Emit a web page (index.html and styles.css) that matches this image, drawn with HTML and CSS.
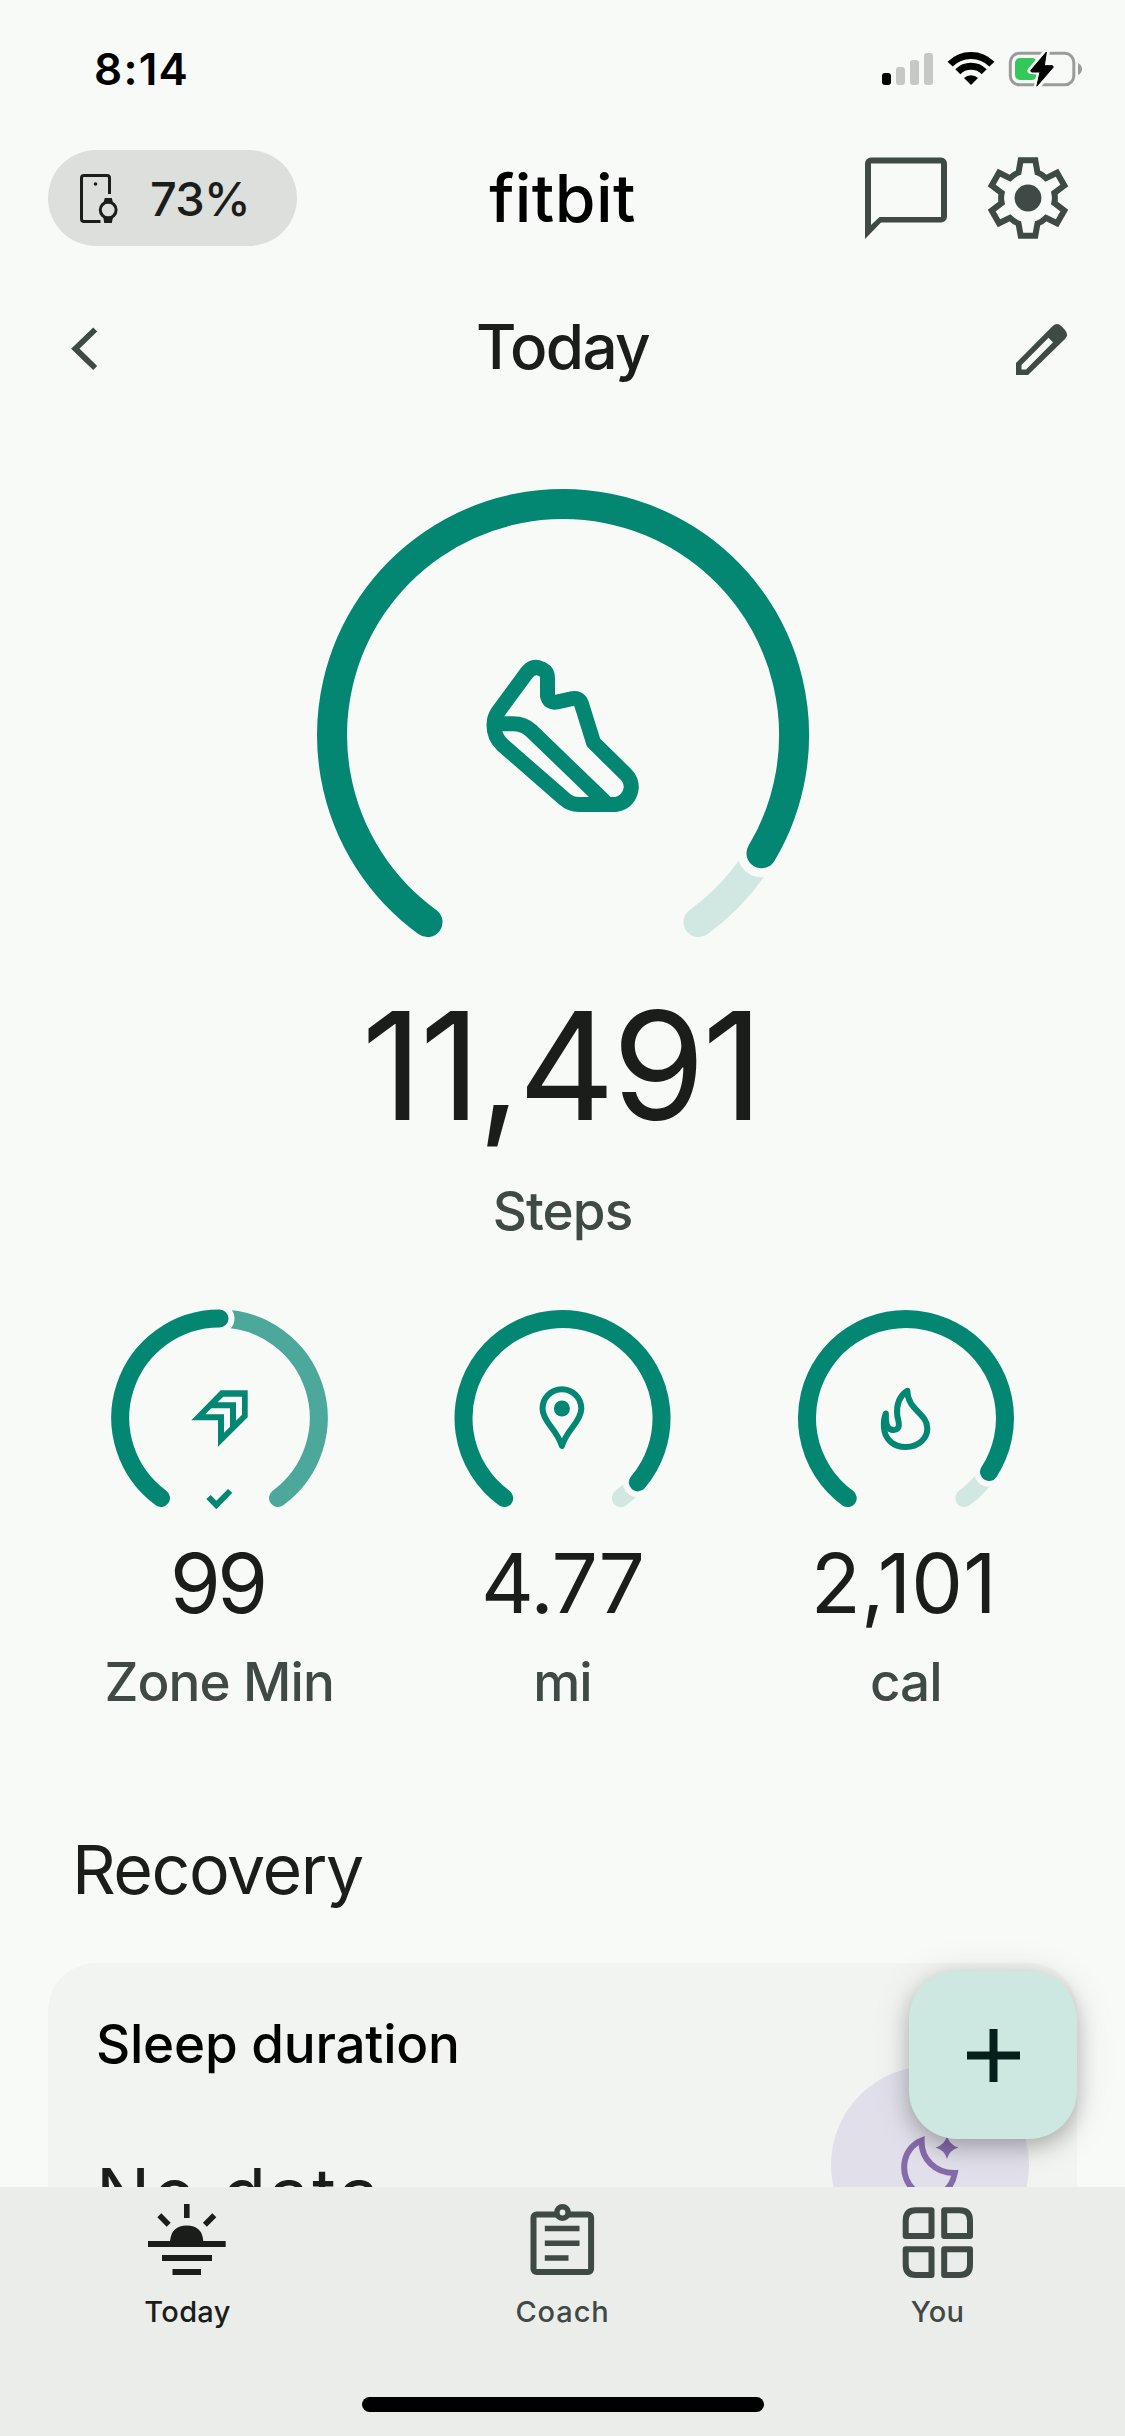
FILE: index.html
```html
<!DOCTYPE html>
<html lang="en">
<head>
<meta charset="utf-8">
<title>Fitbit</title>
<link rel="stylesheet" href="styles.css">
</head>
<body>
<div class="screen">
  <main class="content">
    <div class="status">
      <span class="status-time">8:14</span>
      <svg class="status-icons" viewBox="880 48 204 42" width="204" height="42">
        <rect x="882" y="73" width="9" height="12" rx="3"/>
        <g fill="#c6c8c5">
          <rect x="896" y="67" width="9" height="18" rx="3"/>
          <rect x="910" y="60" width="9" height="25" rx="3"/>
          <rect x="924" y="53" width="9" height="32" rx="3"/>
        </g>
        <g fill="none" stroke="#000" stroke-width="7">
          <path d="M950.1 64.1A29.5 29.5 0 0 1 991.9 64.1"/>
          <path d="M957.8 71.8A18.7 18.7 0 0 1 984.2 71.8"/>
        </g>
        <path d="M971 85L964 78A10 10 0 0 1 978 78Z"/>
        <rect x="1010.3" y="53.3" width="63.5" height="31.5" rx="9" fill="none" stroke="#9a9c99" stroke-width="3"/>
        <path d="M1078 63Q1082 65 1082 69T1078 75Z" fill="#9a9c99"/>
        <rect x="1015" y="58" width="22" height="22" rx="5" fill="#34c759"/>
        <path d="M1047 51L1030.4 70.7 1040 72 1036.8 87 1053.6 67 1044.3 65.5Z" fill="none" stroke="#f8faf7" stroke-width="6" stroke-linejoin="round"/>
        <path d="M1046.4 52L1031 70.2Q1030.4 71.7 1032 72H1040L1036.8 86.2 1053 67.5Q1053.8 66 1052 65.7H1044.3Z" stroke="#000" stroke-linejoin="round"/>
      </svg>
    </div>

    <header class="header">
      <div class="battery-pill">
        <svg viewBox="80 174 38 49" width="38" height="49">
          <path d="M109.5 194V178Q109.5 175.5 107 175.5H84Q81.500 175.500 81.500 178V219Q81.500 221.500 84 221.500H100.500" fill="none" stroke="#1b1d1b" stroke-width="3"/>
          <circle cx="95.500" cy="184" r="1.800" fill="#1b1d1b"/>
          <circle cx="108.200" cy="210" r="7.900" fill="none" stroke="#1b1d1b" stroke-width="3"/>
          <path d="M104.800 198H111.800L113.200 203.500H103.200ZM103.200 216.500H113.200L111.800 223H104.200Z" fill="#1b1d1b"/>
        </svg>
        <span class="battery-level">73%</span>
      </div>
      <div class="brand">fitbit</div>
      <div class="header-actions">
        <svg viewBox="865 157 82 82" width="82" height="82" fill="#3f4945">
          <path fill-rule="evenodd" d="M865 239V163.500A6 6 0 0 1 871 157.500H941A6 6 0 0 1 947 163.500V216.500A6 6 0 0 1 941 222.500H881ZM871 225L879.500 217H941V163.500H871Z"/>
        </svg>
        <svg viewBox="-41 -41 82 82" width="82" height="82">
          <path d="M-9.500-25.500L-7.300-37.700H7.300L9.500-25.500Q13.500-24.200 18-19.800L29-25.200 36.300-12.500 26.300-5Q27.500 0 26.300 5L36.300 12.500 29 25.200 18 19.800Q13.500 24.200 9.500 25.500L7.300 37.700H-7.300L-9.500 25.500Q-13.500 24.200-18 19.800L-29 25.200-36.300 12.500-26.300 5Q-27.500 0-26.300-5L-36.300-12.500-29-25.200-18-19.800Q-13.500-24.200-9.500-25.500Z" fill="none" stroke="#3f4945" stroke-width="6"/>
          <circle r="13.400" fill="#3f4945"/>
        </svg>
      </div>
    </header>

    <div class="datebar">
      <svg viewBox="70 326 29 45" width="29" height="45">
        <path d="M95.200 329.500L75.300 348.700 95.200 368" fill="none" stroke="#3f4945" stroke-width="5.800"/>
      </svg>
      <h1 class="date-title">Today</h1>
      <svg viewBox="1015 321 54 54" width="54" height="54" fill="#3f4945">
        <path fill-rule="evenodd" d="M1016 374V362L1052.500 325.200Q1057 321 1061.500 325.200L1065 329Q1069 333.500 1065 338L1028 374ZM1021.500 368.500H1026L1053 341.200 1048.500 336.800 1021.500 364Z"/>
      </svg>
    </div>

    <section class="steps">
      <svg viewBox="312 485 501 455" width="501" height="455" fill="none" stroke-linecap="round">
        <path d="M761.500 853.300A231 231 0 0 1 698.500 922.100" stroke="#d0e8e1" stroke-width="30"/>
        <circle cx="761.500" cy="853.300" r="24" fill="#f8faf7"/>
        <path d="M427.500 922.100A231 231 0 1 1 761.500 853.300" stroke="#038672" stroke-width="30"/>
        <g stroke="#038672" stroke-width="15" stroke-linejoin="round">
          <path d="M498 712L527 672.500Q533 665 541 668.700L543 669.700Q547.500 672 547.500 678V695.500Q549 703.500 557 702L570.500 699Q579 696.800 581.500 704L593.500 742.500 626 774.500Q631.300 779.500 631.300 788 629 802 616 804.500H579Q570.500 804.500 564.500 799L502 744.500Q494 736.500 494 725.500 494 717.500 498 712Z"/>
          <path d="M500 723.700H513Q524 723.700 531 730.500L604 801"/>
        </g>
      </svg>
      <div class="steps-value">11,491</div>
      <div class="label">Steps</div>
    </section>

    <section class="metrics">
      <div class="metric">
        <svg viewBox="109 1307 220 204" width="220" height="204" fill="none" stroke-linecap="round">
          <path d="M219.500 1318.500A99.300 99.300 0 0 1 278 1498" stroke="#4ba89a" stroke-width="18"/>
          <circle cx="219.500" cy="1318.500" r="15" fill="#f8faf7"/>
          <path d="M161 1498A99.300 99.300 0 0 1 219.500 1318.500" stroke="#038672" stroke-width="18"/>
          <path fill="#038672" fill-rule="evenodd" d="M220.700 1390.300H247.700V1417.300L218 1446.700V1420.300H191.300ZM223.300 1396.700L217.500 1402.300H236V1420.700L242 1414.700V1396.700ZM211.300 1408.300L205.300 1414.300H224V1432.700L230 1426.700V1408.300Z"/>
          <path fill="#038672" d="M206.300 1499L210.700 1495 216.300 1500.700 228 1489 232.300 1492.700 216.300 1509.300Z"/>
        </svg>
        <div class="metric-value tight">99</div>
        <div class="label">Zone Min</div>
      </div>
      <div class="metric">
        <svg viewBox="452.500 1307 220 204" width="220" height="204" fill="none" stroke-linecap="round">
          <path d="M638.300 1482.400A99 99 0 0 1 621.300 1498.100" stroke="#d0e8e1" stroke-width="18"/>
          <circle cx="638.300" cy="1482.400" r="15" fill="#f8faf7"/>
          <path d="M504.700 1498.100A99 99 0 1 1 638.300 1482.400" stroke="#038672" stroke-width="18"/>
          <path d="M562.400 1446Q560 1438 552 1427.500 543 1416 543 1408.500A19.400 19.400 0 0 1 581.800 1408.500Q581.800 1416 572.800 1427.500 564.800 1438 562.400 1446Z" stroke="#038672" stroke-width="6" stroke-linejoin="round"/>
          <circle cx="562.400" cy="1408.500" r="8" fill="#038672"/>
        </svg>
        <div class="metric-value">4.77</div>
        <div class="label">mi</div>
      </div>
      <div class="metric">
        <svg viewBox="796 1307 220 204" width="220" height="204" fill="none" stroke-linecap="round">
          <path d="M989 1472A99 99 0 0 1 964.300 1498.100" stroke="#d0e8e1" stroke-width="18"/>
          <circle cx="989" cy="1472" r="15" fill="#f8faf7"/>
          <path d="M847.700 1498.100A99 99 0 1 1 989 1472" stroke="#038672" stroke-width="18"/>
          <path d="M907.300 1390.800C898 1397 896.500 1407 897.200 1415 897.600 1420 900.500 1424 898 1428 895 1431.500 888 1430.500 886.500 1424 885.500 1420 886 1416 885.800 1413.500 883.800 1418 883.800 1424 883.900 1427 884.500 1439 893 1447 905.800 1447 918.500 1447 927.300 1438.500 927.300 1428.500 927.300 1413 907.500 1410 907.300 1390.800Z" stroke="#038672" stroke-width="6" stroke-linejoin="round"/>
        </svg>
        <div class="metric-value wide">2,101</div>
        <div class="label">cal</div>
      </div>
    </section>

    <h2 class="section-title">Recovery</h2>
    <article class="card">
      <div class="card-text">
        <h3 class="card-title">Sleep duration</h3>
        <p class="card-value">No data</p>
      </div>
      <div class="card-badge">
        <svg viewBox="831 2067.500 198 198" width="198" height="198">
          <path d="M921.600 2142C901 2150 898 2180 916 2193 930 2203 951 2196 954.800 2174.500 935 2175 921 2160 921.600 2142Z" fill="none" stroke="#866bab" stroke-width="6"/>
          <path d="M947 2137.500Q949.500 2146.500 958.300 2149 949.500 2151.500 947 2160.500 944.500 2151.500 935.700 2149 944.500 2146.500 947 2137.500Z" fill="#866bab"/>
        </svg>
      </div>
    </article>
  </main>

  <nav class="tabs">
    <div class="tab active">
      <svg viewBox="148 2202 80 78" width="80" height="78" fill="#1b1d1b">
        <path d="M184 2204H189.600V2218H184ZM148 2241H170Q171.500 2225.500 186.800 2225.500T203.300 2241H225.700V2247H148ZM162 2255H212V2261H162ZM172.500 2269H201V2275H172.500Z"/>
        <path d="M159.300 2215.200L168.700 2224.800M214.300 2215.200L204.900 2224.800" stroke="#1b1d1b" stroke-width="5.600"/>
      </svg>
      <span class="tab-label">Today</span>
    </div>
    <div class="tab">
      <svg viewBox="522.500 2202 80 78" width="80" height="78" fill="none" stroke="#3f4945">
        <rect x="533" y="2214.400" width="57.600" height="57.600" rx="3" stroke-width="6"/>
        <circle cx="562" cy="2212.500" r="5.700" fill="#ebedea" stroke-width="5.600"/>
        <path d="M544.300 2228.500H579M544.300 2243.300H579M544.300 2258H568" stroke-width="5.500"/>
      </svg>
      <span class="tab-label wide-label">Coach</span>
    </div>
    <div class="tab">
      <svg viewBox="897.500 2202 80 78" width="80" height="78" fill="none" stroke="#3f4945" stroke-width="6" stroke-linejoin="round">
        <path d="M915.500 2210.200H931V2236H905.200V2220.500Q905.200 2210.200 915.500 2210.200ZM943.700 2210.200H959.200Q969.500 2210.200 969.500 2220.500V2236H943.700ZM905.200 2249.200H931V2275H915.500Q905.200 2275 905.200 2264.700ZM943.700 2249.200H969.500V2264.700Q969.500 2275 959.200 2275H943.700Z"/>
      </svg>
      <span class="tab-label">You</span>
    </div>
  </nav>

  <button class="fab" aria-label="Add">
    <svg viewBox="0 0 53 53" width="53" height="53"><path d="M26.500 0V53M0 26.500H53" stroke="#05201a" stroke-width="8"/></svg>
  </button>
  <div class="home-indicator"></div>
</div>
</body>
</html>
```
FILE: styles.css
```css
* { box-sizing: border-box; margin: 0; padding: 0; }

body {
  background: #f8faf7;
  color: #1b1d1b;
  font-family: Inter, "Liberation Sans", sans-serif;
}

svg { display: block; flex: none; }

.screen {
  position: relative;
  display: flex;
  flex-direction: column;
  width: 1125px;
  height: 2436px;
  overflow: hidden;
}

.content {
  height: 2187px;
  flex: none;
  overflow: hidden;
}

.status {
  display: flex;
  justify-content: space-between;
  align-items: center;
  height: 138px;
  padding: 0 41px 0 94px;
  color: #000;
}

.status-time {
  font-size: 44px;
  font-weight: 600;
  letter-spacing: 1.27px;
}

.header {
  display: grid;
  grid-template-columns: 1fr auto 1fr;
  align-items: center;
  height: 120px;
  padding: 0 48px;
}

.battery-pill {
  display: flex;
  align-items: center;
  gap: 32px;
  width: 249px;
  height: 96px;
  padding-left: 32px;
  border-radius: 48px;
  background: #dddfdc;
}

.battery-level {
  font-size: 47px;
  font-weight: 500;
  letter-spacing: -0.8px;
}

.brand {
  color: #000;
  font-size: 66px;
  font-weight: 500;
  line-height: 80px;
  letter-spacing: 0.4px;
}

.header-actions {
  display: flex;
  justify-content: flex-end;
  gap: 40px;
  padding-right: 8px;
}

.datebar {
  display: grid;
  grid-template-columns: 1fr auto 1fr;
  align-items: center;
  height: 177px;
  padding: 4px 56px 0;
}

.datebar > :first-child { margin-left: 14px; }
.datebar > :last-child { justify-self: end; }

.date-title {
  margin-top: -3px;
  font-size: 62px;
  font-weight: 500;
  line-height: 90px;
  letter-spacing: -1.66px;
}

.steps {
  display: flex;
  flex-direction: column;
  align-items: center;
  padding-top: 50px;
}

.steps-value {
  margin-top: 50px;
  padding-right: 3px;
  font-size: 150px;
  line-height: 151px;
  letter-spacing: -2.9px;
}

.steps .label { margin-top: 40px; }

.label {
  color: #3f4945;
  font-size: 53px;
  font-weight: 500;
  line-height: 60px;
  letter-spacing: -0.9px;
}

.metrics {
  display: grid;
  grid-template-columns: repeat(3, 1fr);
  margin-top: 66px;
  padding: 0 47.5px;
}

.metric {
  display: flex;
  flex-direction: column;
  align-items: center;
}

.metric-value {
  margin-top: 28px;
  font-size: 82px;
  line-height: 90px;
  letter-spacing: -1px;
}

.metric-value.tight {
  padding-right: 4px;
  letter-spacing: -3.8px;
}

.metric-value.wide {
  padding-right: 4px;
  letter-spacing: 0.2px;
}

.metric .label { margin-top: 23px; }

.section-title {
  margin: 117px 0 0 72px;
  font-size: 68px;
  font-weight: 400;
  line-height: 80px;
  letter-spacing: -1.4px;
}

.card {
  display: flex;
  justify-content: space-between;
  height: 420px;
  margin: 54px 48px 0;
  padding: 51px 48px 0;
  border-radius: 48px;
  background: #f2f4f1;
}

.card-title {
  color: #000;
  font-size: 53px;
  font-weight: 500;
  line-height: 60px;
  letter-spacing: -0.24px;
}

.card-value {
  margin-top: 80px;
  font-size: 72px;
  line-height: 80px;
  letter-spacing: 2.8px;
}

.card-badge {
  width: 198px;
  height: 198px;
  margin-top: 52px;
  border-radius: 50%;
  background: #e1dfe9;
}

.tabs {
  display: grid;
  grid-template-columns: repeat(3, 1fr);
  height: 249px;
  padding-top: 15px;
  background: #ebedea;
}

.tab {
  display: flex;
  flex-direction: column;
  align-items: center;
  color: #3f4945;
}

.tab.active { color: #1b1d1b; }

.tab-label {
  margin-top: 14px;
  font-size: 29px;
  font-weight: 500;
  line-height: 36px;
  letter-spacing: 0.3px;
}

.wide-label { letter-spacing: 0.9px; }

.fab {
  position: absolute;
  top: 1971px;
  right: 48px;
  display: grid;
  place-items: center;
  width: 168px;
  height: 168px;
  border: 0;
  border-radius: 48px;
  background: #cde8e0;
  box-shadow: 0 8px 20px rgba(0, 0, 0, 0.22), 0 4px 40px rgba(0, 0, 0, 0.12);
}

.home-indicator {
  position: absolute;
  bottom: 24px;
  left: 362px;
  width: 402px;
  height: 15px;
  border-radius: 8px;
  background: #000;
}
```
